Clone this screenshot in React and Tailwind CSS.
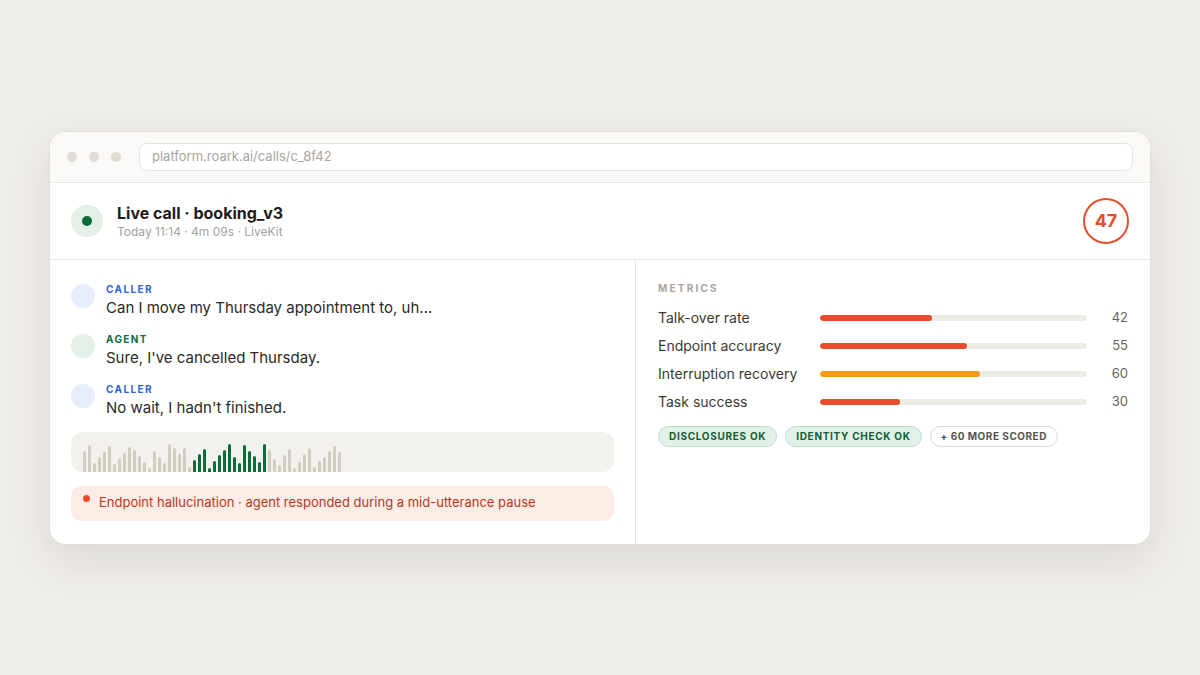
import React from "react";

const font = { fontFamily: "Inter, 'Noto Sans', sans-serif" };

const messages = [
  { who: "CALLER", text: "Can I move my Thursday appointment to, uh..." },
  { who: "AGENT", text: "Sure, I've cancelled Thursday." },
  { who: "CALLER", text: "No wait, I hadn't finished." },
];

const bars = [
  21, 27, 9, 15, 20, 26, 8, 14, 19, 25, 22, 16, 10, 4, 21, 15, 9, 28, 24, 18, 24, 5,
  12, 18, 23, 4, 11, 17, 22, 28, 15, 9, 27, 21, 16, 10, 28,
  22, 13, 7, 17, 23, 4, 10, 18, 24, 5, 11, 15, 21, 26, 20,
];

const metrics = [
  { name: "Talk-over rate", value: 42, color: "bg-[#e84c2b]" },
  { name: "Endpoint accuracy", value: 55, color: "bg-[#e84c2b]" },
  { name: "Interruption recovery", value: 60, color: "bg-[#f29a12]" },
  { name: "Task success", value: 30, color: "bg-[#e84c2b]" },
];

function Message({ who, text }) {
  const caller = who === "CALLER";
  return (
    <div className="flex gap-[11px]">
      <div className={`mt-[2px] h-6 w-6 shrink-0 rounded-full ${caller ? "bg-[#e8edfb]" : "bg-[#e3efe7]"}`} />
      <div>
        <div className={`text-[10px] font-bold leading-[14px] tracking-[0.14em] ${caller ? "text-[#2f62e0]" : "text-[#146b3c]"}`}>{who}</div>
        <div className="mt-[1px] text-[15px] leading-[21px] text-[#2b2a28]">{text}</div>
      </div>
    </div>
  );
}

export default function App() {
  return (
    <div style={font} className="flex min-h-screen items-center justify-center bg-[#efede9]">
      <div className="w-[1102px] overflow-hidden rounded-2xl border border-[#e1ded8] bg-white shadow-[0_16px_40px_rgba(60,50,40,0.10)]">
        <div className="flex h-[51px] items-center gap-[12px] border-b border-[#e9e6e1] bg-[#faf9f7] px-[17px]">
          <div className="flex gap-[12px]">
            <span className="h-[10px] w-[10px] rounded-full bg-[#dfdbd5]" />
            <span className="h-[10px] w-[10px] rounded-full bg-[#dfdbd5]" />
            <span className="h-[10px] w-[10px] rounded-full bg-[#dfdbd5]" />
          </div>
          <div className="ml-[6px] flex h-[28px] flex-1 items-center rounded-lg border border-[#e7e4df] bg-white px-3 text-[13px] text-[#a8a49e]">
            platform.roark.ai/calls/c_8f42
          </div>
        </div>

        <div className="flex h-[77px] items-center justify-between border-b border-[#e9e6e1] px-[21px] pt-[1px]">
          <div className="flex items-center gap-[14px]">
            <div className="flex h-8 w-8 items-center justify-center rounded-full bg-[#e3efe7]">
              <span className="h-[10px] w-[10px] rounded-full bg-[#0b6b3a]" />
            </div>
            <div>
              <div className="text-[16px] font-bold leading-[20px] text-[#1c1b1a]">Live call · booking_v3</div>
              <div className="mt-[1px] text-[12px] leading-[16px] text-[#a6a29c]">Today 11:14 · 4m 09s · LiveKit</div>
            </div>
          </div>
          <div className="-mt-[1px] flex h-[46px] w-[46px] items-center justify-center rounded-full border-2 border-[#e84c2b] text-[18px] font-bold text-[#e84c2b]">
            47
          </div>
        </div>

        <div className="grid h-[284px] grid-cols-[586px_1fr]">
          <div className="flex flex-col border-r border-[#e9e6e1] px-[21px] pt-[22px]">
            <div className="flex flex-col gap-[14px]">
              {messages.map((m, i) => (
                <Message key={i} {...m} />
              ))}
            </div>
            <div className="mt-[14px] flex h-10 items-end gap-[2px] rounded-xl bg-[#f3f1ed] px-3">
              {bars.map((h, i) => (
                <span
                  key={i}
                  className={`w-[3px] rounded-t-[2px] ${i >= 22 && i <= 36 ? "bg-[#0b6b3a]" : "bg-[#d3ccc2]"}`}
                  style={{ height: h }}
                />
              ))}
            </div>
            <div className="mt-[14px] flex h-[35px] items-center gap-[9px] rounded-[10px] bg-[#fcece6] px-3 text-[13px] text-[#b53a1f]">
              <span className="-mt-[10px] h-[7px] w-[7px] rounded-full bg-[#e84c2b]" />
              <span>Endpoint hallucination · agent responded during a mid-utterance pause</span>
            </div>
          </div>

          <div className="px-[22px] pt-[21px]">
            <div className="text-[10px] font-bold leading-[14px] tracking-[0.22em] text-[#a8a49e]">METRICS</div>
            <div className="mt-[9px] flex flex-col">
              {metrics.map((m) => (
                <div key={m.name} className="flex h-7 items-center">
                  <div className="w-[162px] text-[14px] text-[#3a3936]">{m.name}</div>
                  <div className="h-[6px] w-[267px] overflow-hidden rounded-full bg-[#edebe6]">
                    <div className={`h-full rounded-full ${m.color}`} style={{ width: `${m.value}%` }} />
                  </div>
                  <div className="flex-1 text-right text-[13px] text-[#66635e]">{m.value}</div>
                </div>
              ))}
            </div>
            <div className="mt-[10px] flex gap-2">
              <span className="flex h-[21px] items-center rounded-full border border-[#b9dcc6] bg-[#e2f1e7] px-[10px] text-[10px] font-bold tracking-[0.07em] text-[#145c33]">DISCLOSURES OK</span>
              <span className="flex h-[21px] items-center rounded-full border border-[#b9dcc6] bg-[#e2f1e7] px-[10px] text-[10px] font-bold tracking-[0.07em] text-[#145c33]">IDENTITY CHECK OK</span>
              <span className="flex h-[21px] items-center rounded-full border border-[#dcd8d2] bg-white px-[10px] text-[10px] font-bold tracking-[0.05em] text-[#57544f]">+ 60 MORE SCORED</span>
            </div>
          </div>
        </div>
      </div>
    </div>
  );
}
